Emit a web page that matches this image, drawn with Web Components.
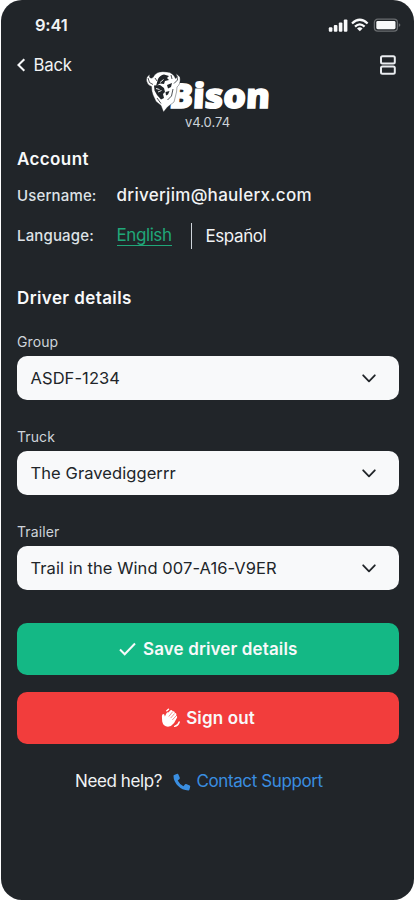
<!DOCTYPE html>
<html lang="en">
<head>
<meta charset="utf-8">
<title>Bison account</title>
<style>
html,body{margin:0;background:#fff}
body{font-family:Inter,"Liberation Sans",sans-serif;color:#f1f3f5}
</style>
</head>
<body>
<account-screen></account-screen>
<script>
function define(name, html) {
  const t = document.createElement('template');
  t.innerHTML = html;
  customElements.define(name, class extends HTMLElement {
    constructor() {
      super();
      this.attachShadow({mode: 'open'}).append(t.content.cloneNode(true));
    }
  });
}

define('status-bar', `
<style>
:host{display:flex;height:50px;box-sizing:border-box;padding:0 14px 0 35px;align-items:center;justify-content:space-between}
span{font-size:16.5px;font-weight:600;letter-spacing:-.2px}
svg{display:block}
</style>
<span>9:41</span>
<svg width="73" height="16" viewBox="0 0 73 16" fill="#f8f9fa">
<rect x="0.800" y="10.200" width="3.600" height="4.600" rx="1"/><rect x="5.800" y="8" width="3.600" height="6.800" rx="1"/><rect x="10.800" y="5.400" width="3.600" height="9.400" rx="1"/><rect x="15.800" y="2.600" width="3.600" height="12.200" rx="1"/>
<g fill="none" stroke="#f8f9fa" stroke-width="2.3"><path d="M24 6.5Q31.8-.9 39.6 6.5"/><path d="M27 9.6Q31.8 5.1 36.6 9.6"/></g><path d="M29 11.4Q31.8 9.1 34.6 11.4L31.8 14.3Z"/>
<rect x="46.400" y="2.100" width="23" height="12" rx="3.400" fill="none" stroke="#6a6d70" stroke-width="1.300"/><rect x="48.300" y="4" width="19.200" height="8.200" rx="1.400"/><path d="M70.800 6.300Q72.400 6.900 72.400 8.100T70.800 9.900Z" fill="#6a6d70"/>
</svg>`);

define('nav-bar', `
<style>
:host{display:flex;height:30px;padding:0 19px 0 17px;align-items:center;justify-content:space-between}
div{display:flex;align-items:center;gap:7.500px;font-size:16.800px;letter-spacing:-.25px}
svg{display:block}
</style>
<div><svg width="9" height="14" viewBox="0 0 9 14" fill="none" stroke="#f8f9fa" stroke-width="2.1"><path d="M7.3 1.2 1.400 7l5.900 5.800"/></svg><span>Back</span></div>
<svg width="16" height="20" viewBox="0 0 16 20" fill="none" stroke="#e9ecef" stroke-width="2"><rect x="1" y="1.2" width="13.8" height="7.2" rx="1.5"/><rect x="1" y="11.6" width="13.8" height="7.2" rx="1.5"/></svg>`);

define('brand-logo', `
<style>
:host{display:block;height:50px;margin-top:-10px;text-align:center}
svg{display:block;margin:0 auto}
p{margin:0 0 0;font-size:13px;line-height:16px;color:#ced4da;letter-spacing:0}
</style>
<svg width="126" height="44" viewBox="0 0 126 44" style="overflow:visible">
<text transform="translate(23.500 37.500) skewX(-3)" font-family="Open Sans" font-weight="800" font-size="34" textLength="101" lengthAdjust="spacingAndGlyphs" fill="#fff" stroke="#fff" stroke-width="1.400">Bison</text>
<path fill="#fff" stroke="#212529" stroke-width=".4" d="M4.800 4.500Q.8 6.500 1.500 11q1.200 4.500 5 5.500 0 5 1.500 8.500l3 6.500 5 4 2.500 6.500L22.500 37l6.500-5 2.500-10 .5-5q4-3 3-10l-4-3.500q2 4-.5 5Q28 2.500 22 2 13 .5 9.500 5q-1.500 4-4 3-1.800-1-.7-3.500Z"/>
<g fill="#212529"><path d="M13 9q2-4 6-4.500l5 1.500-2 2 2 2-4 1-1 3-4-.5-4 2.500Z"/><path d="m9 15.500 6-.5 4 3 1 4-2 2 1 4-3 1.500-4-4.500-2.500-4.500Z"/><path d="m22 15 5-2-1 4-3 1.500Zm-1.500 7 4-1-1.500 3.500-2 1Z"/></g>
<g stroke="#212529" stroke-width=".8" fill="none"><path d="m3 8 1.500 4.500 3.500 2M32 6l.5 4-3.500 3.500M12 28l4 5.500M28 19l-1.500 7-4 4M10 8l2 3M26 5l1 4"/></g>
<path d="m11 18.500 3.500 1M13 22l3.500-1.500M15 12.500l3.500-3" stroke="#fff" stroke-width=".9"/>
</svg>
<p>v4.0.74</p>`);

define('section-title', `
<style>
:host{display:block;font-size:17px;line-height:24px;font-weight:600;color:#f8f9fa;letter-spacing:.4px}
</style><slot></slot>`);

define('info-row', `
<style>
:host{display:flex;align-items:center;height:28px;padding-left:17px;font-size:17px}
.l{width:99.500px;font-size:15px;font-weight:500;color:#dee2e6;letter-spacing:.15px}
.v{display:flex;align-items:center}
</style><span class="l"><slot name="label"></slot></span><div class="v"><slot></slot></div>`);

define('language-switch', `
<style>
:host{display:flex;align-items:center;font-size:17px;letter-spacing:-.42px}
.on{color:#20a779;line-height:19px;border-bottom:1px solid #20a779;margin-right:19px;margin-top:1px}
i{width:1px;height:26px;background:#ced4da;margin-right:14px}
</style><span class="on">English</span><i></i><span>Español</span>`);

define('select-field', `
<style>
:host{display:block;height:95px;padding:0 16px 0 17px}
label{display:block;font-size:14px;line-height:20px;color:#ced4da;height:24px;letter-spacing:.1px}
.box{height:44px;box-sizing:border-box;background:#f8f9fa;border-radius:10px;padding:0 23px 0 13.500px;display:flex;align-items:center;justify-content:space-between;color:#212529;font-size:16.500px;letter-spacing:.08px}
</style>
<label><slot name="label"></slot></label>
<div class="box"><slot></slot><svg width="14" height="9" viewBox="0 0 14 9" fill="none" stroke="#212529" stroke-width="1.800" stroke-linecap="round" stroke-linejoin="round"><path d="m1.200 1.300 5.800 6 5.800-6"/></svg></div>`);

define('action-button', `
<style>
:host{display:flex;align-items:center;justify-content:center;gap:7.500px;height:52px;margin:0 16px 0 17px;border-radius:10px;background:var(--fill);color:#f8f9fa;font-size:17px;font-weight:600;letter-spacing:.13px}
</style><slot name="icon"></slot><slot></slot>`);

define('help-line', `
<style>
:host{display:flex;align-items:center;height:24px;padding-left:75px;font-size:17px;letter-spacing:-.4px}
svg{margin:2px 6px 0 10.500px}
.link{color:#3a8ee0}
</style><span>Need help?</span><svg width="18" height="18" viewBox="0 0 18 18" fill="#3a8ee0"><path d="M1.200 1.900 4.200.8q.8-.2 1.100.5l1.500 3.500q.2.6-.3 1.100L4.700 7.500q2 4 5.700 5.800l1.700-2q.4-.5 1.100-.2l3.500 1.500q.7.3.5 1.100l-.8 3q-.2.700-1 .700Q9.200 17.300 4.900 12.700.6 8.200.5 2.900q0-.8.7-1Z"/></svg><span class="link">Contact Support</span>`);

define('account-screen', `
<style>
:host{display:block;width:413px;height:900px;margin:0 auto;border-radius:21px;overflow:hidden;background:#212529}
.in{margin:0 -1px;width:415px}
section-title{padding-left:17px}
.acc{margin-top:17px;padding-top:10px}.user{margin-top:10px}.lang{margin-top:12.500px}
.drv{margin-top:36px;margin-bottom:22.500px}
.save{--fill:#14b885;margin-top:6px}
.out{--fill:#f23d3c;margin-top:16.500px}
.help{margin-top:25px}
</style>
<div class="in">
<status-bar></status-bar><nav-bar></nav-bar><brand-logo></brand-logo>
<section-title class="acc">Account</section-title>
<info-row class="user"><span slot="label">Username:</span><span style="font-weight:500;letter-spacing:.29px">driverjim@haulerx.com</span></info-row>
<info-row class="lang"><span slot="label">Language:</span><language-switch></language-switch></info-row>
<section-title class="drv">Driver details</section-title>
<select-field><span slot="label">Group</span><span>ASDF-1234</span></select-field>
<select-field><span slot="label">Truck</span><span>The Gravediggerrr</span></select-field>
<select-field><span slot="label">Trailer</span><span>Trail in the Wind 007-A16-V9ER</span></select-field>
<action-button class="save"><svg slot="icon" width="17" height="14" viewBox="0 0 17 14" fill="none" stroke="#f8f9fa" stroke-width="2"><path d="m1 7.500 4.700 4.700L16 1.500"/></svg><span>Save driver details</span></action-button>
<action-button class="out"><svg slot="icon" width="19" height="20" viewBox="0 0 19 20" fill="#fff" style="margin-right:-1.500px"><path d="M.9 8.600q0-2.400 1.300-2.500 1.300 0 1.700 2.300L5.300 5.600q1-1.700 2-1.200L9.500 2.300q1-.7 1.700.2l.6.9q1.200-.6 1.800.5l.3 1.200q1.500-.1 1.500 1.300l-.3 1.300q1.400.3 1 1.700l-3 5.600Q10.700 18.300 7 18.700 2.200 18.600 1.200 13.500Z"/><g stroke="#f23d3c" stroke-width=".6" fill="none"><path d="m11.400 4-3.600 4.500M13.600 5.500l-4 4.600M15 8l-3.700 4"/></g><g stroke="#fff" fill="none" stroke-width="1.400" stroke-linecap="round"><path d="M5.800 2.800 7.500 1.200M18.200 14q-1 3.600-4.600 4.400"/></g></svg><span>Sign out</span></action-button>
<help-line class="help"></help-line>
</div>`);
</script>
</body>
</html>
